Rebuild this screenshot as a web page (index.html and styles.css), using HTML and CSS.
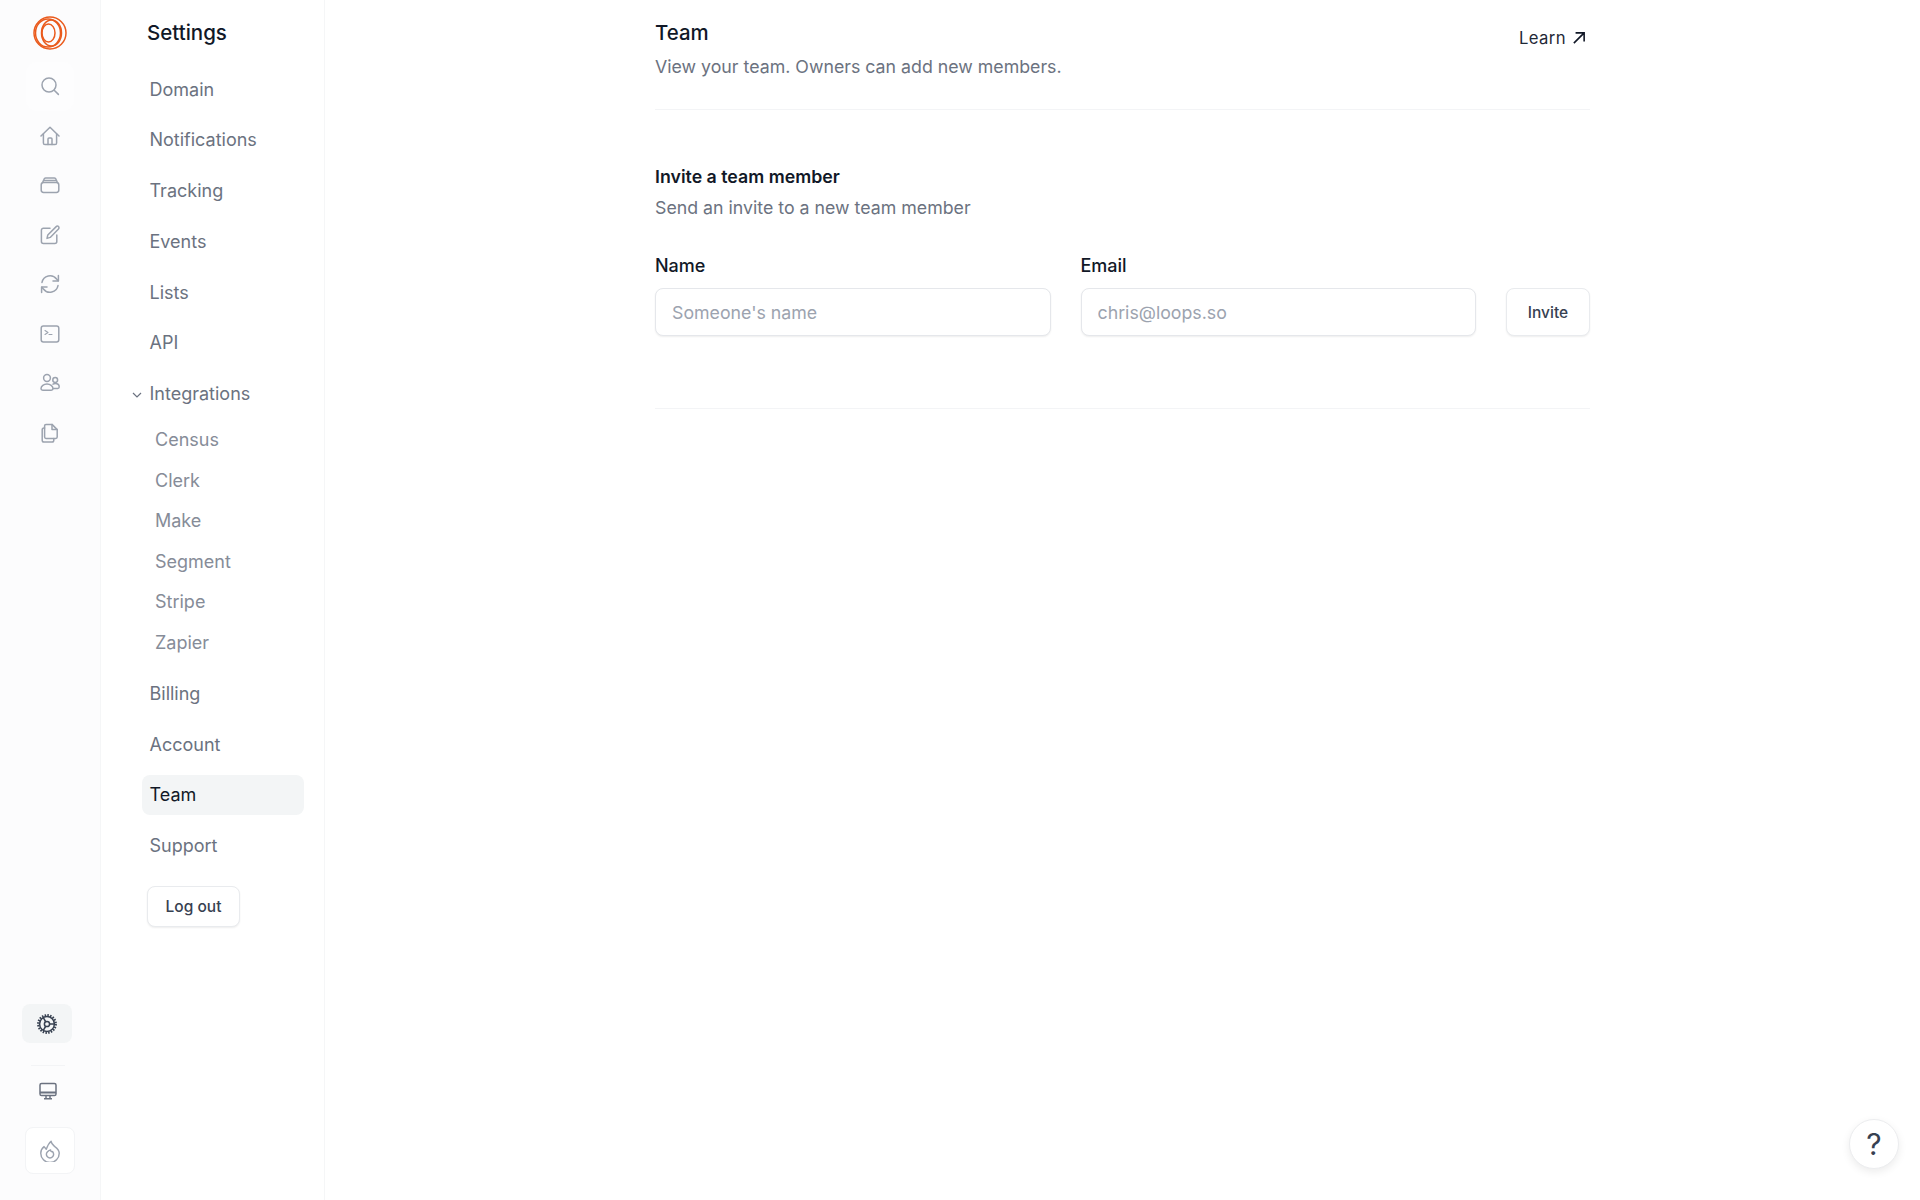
FILE: index.html
```html
<!DOCTYPE html>
<html lang="en">
<head>
  <meta charset="UTF-8">
  <meta name="viewport" content="width=device-width, initial-scale=1.0">
  <title>Team settings</title>
  <link rel="stylesheet" href="styles.css">
</head>
<body>

<div class="app">
  <!-- Icon rail -->
  <aside class="rail">
    <div class="rail-top">
      <a class="logo">
        <svg width="34" height="34" viewBox="0 0 34 34" fill="none" stroke="#ea5a1c" stroke-width="1.5">
          <circle cx="17" cy="17" r="16"/>
          <ellipse cx="15" cy="17" rx="12.500" ry="14"/>
          <ellipse cx="18.500" cy="17" rx="10" ry="13"/>
          <ellipse cx="15.500" cy="17" rx="6.500" ry="9"/>
        </svg>
      </a>
      <a class="rail-link rail-search">
        <svg class="ico" viewBox="0 0 20 20"><circle cx="9" cy="9" r="7"/><path d="M14.2 14.2 18.4 18.4"/></svg>
      </a>
      <a class="rail-link">
        <svg class="ico" viewBox="0 0 20 20"><path d="M1 10 10 1.2 19 10"/><path d="M3.4 8v9a1.6 1.6 0 0 0 1.6 1.6h10a1.6 1.6 0 0 0 1.6-1.6V8"/><path d="M8 18.4V13a1 1 0 0 1 1-1h2a1 1 0 0 1 1 1v5.4"/></svg>
      </a>
      <a class="rail-link">
        <svg class="ico" viewBox="0 0 20 20"><rect x="1.2" y="7.5" width="17.6" height="10" rx="2.4"/><path d="M2.6 7.5 4 4.2A1.8 1.8 0 0 1 5.6 3h8.8A1.8 1.8 0 0 1 16 4.2l1.4 3.3"/><path d="M4 5.6h12"/></svg>
      </a>
      <a class="rail-link">
        <svg class="ico" viewBox="0 0 20 20"><path d="M10 3.2H3.4a2 2 0 0 0-2 2v11.4a2 2 0 0 0 2 2h11.4a2 2 0 0 0 2-2V10"/><path d="M7 13.4l.8-3.4L16.2 1.6a1.6 1.6 0 0 1 2.3 0 1.6 1.6 0 0 1 0 2.3L10.200 12.400z"/></svg>
      </a>
      <a class="rail-link">
        <svg class="ico" viewBox="0 0 20 20"><path d="M2 8.400A8.200 8.200 0 0 1 16.600 5l1.600 1.800"/><path d="M18.400 1.600v5.400h-5.400"/><path d="M18 11.600A8.200 8.200 0 0 1 3.400 15l-1.600-1.800"/><path d="M1.600 18.400V13h5.400"/></svg>
      </a>
      <a class="rail-link">
        <svg class="ico" viewBox="0 0 20 20"><rect x="1.200" y="2" width="17.600" height="16" rx="2.200"/><path stroke-width="1.100" d="M5 6.500 8 8.500 5 10.500M9 10.500h3"/></svg>
      </a>
      <a class="rail-link">
        <svg class="ico" viewBox="0 0 20 20"><circle cx="7" cy="5" r="3.400"/><circle cx="15.200" cy="7" r="2.400"/><path d="M1 15.800c0-2.800 2.800-4.800 6-4.800s6 2 6 4.800c0 1-1 1.400-1.800 1.400H2.800C2 17.200 1 16.800 1 15.800z"/><path d="M13 11.200c.7-.4 1.400-.6 2.200-.6 2.300 0 4 1.400 4 3.400 0 1-.8 1.400-1.500 1.400h-4.300"/></svg>
      </a>
      <a class="rail-link">
        <svg class="ico" viewBox="0 0 20 20"><path d="M6 1.400h6l5.200 5.200V14a1.400 1.400 0 0 1-1.400 1.400H6A1.400 1.400 0 0 1 4.600 14V2.800A1.400 1.400 0 0 1 6 1.400z"/><path d="M12 1.400v5.200h5.200"/><path d="M4.600 5H4a1.800 1.800 0 0 0-1.800 1.800v10.400A1.800 1.800 0 0 0 4 19h8a1.800 1.800 0 0 0 1.800-1.800v-1.800"/></svg>
      </a>
    </div>
    <div class="rail-bottom">
      <a class="rail-settings">
        <svg width="20" height="20" viewBox="0 0 20 20" fill="none" stroke="#374151">
          <circle cx="10" cy="10" r="7.400" stroke-width="1.500"/>
          <circle cx="10" cy="10" r="8.800" stroke-width="2.200" stroke-dasharray="1.500 1.270"/>
          <circle cx="10" cy="10" r="2.600" stroke-width="1.500"/>
          <path stroke-width="1.500" d="M12.600 10h4.800M8.700 7.750 6.300 3.600M8.700 12.250 6.300 16.400"/>
        </svg>
      </a>
      <div class="rail-sep"></div>
      <a class="rail-monitor">
        <svg width="18" height="18" viewBox="0 0 18 18" fill="none" stroke="#6b7280" stroke-width="1.500"><rect x="1" y="1.500" width="16" height="12" rx="1.600"/><path d="M1 10.500h16" stroke-width="2"/><path d="M7 13.500v3M11 13.500v3M5 16.800h8"/></svg>
      </a>
      <a class="rail-fire">
        <svg width="22" height="22" viewBox="0 0 20 20" fill="none" stroke="#9ca3af" stroke-width="1.300" stroke-linejoin="round"><path d="M11 1.200c.3 2.400 1.800 3.400 3.400 4.800C17 8 18.400 9.800 18.400 12a8.400 8.400 0 1 1-16.800 0c0-2.600 1.200-4.600 3-6l2 2.400C7.600 5.800 8.800 3 11 1.200z"/><path d="M10.500 9c0 1.500 1 1.800 1.800 1.500.6.800 1 1.500 1 2.500a3.300 3.300 0 1 1-6.600 0c0-1.800 1.500-3 3.800-4z"/></svg>
      </a>
    </div>
  </aside>

  <!-- Settings nav -->
  <nav class="sidebar">
    <h2 class="sidebar-title">Settings</h2>
    <a class="nav-item">Domain</a>
    <a class="nav-item">Notifications</a>
    <a class="nav-item">Tracking</a>
    <a class="nav-item">Events</a>
    <a class="nav-item">Lists</a>
    <a class="nav-item">API</a>
    <a class="nav-item nav-group">
      <svg class="chevron" width="12" height="12" viewBox="0 0 12 12" fill="none" stroke="#6b7280" stroke-width="1.200"><path d="M2 4l4 4 4-4"/></svg>
      Integrations
    </a>
    <div class="subnav">
      <a class="sub-item">Census</a>
      <a class="sub-item">Clerk</a>
      <a class="sub-item">Make</a>
      <a class="sub-item">Segment</a>
      <a class="sub-item">Stripe</a>
      <a class="sub-item">Zapier</a>
    </div>
    <a class="nav-item">Billing</a>
    <a class="nav-item">Account</a>
    <a class="nav-item active">Team</a>
    <a class="nav-item">Support</a>
    <button class="btn logout">Log out</button>
  </nav>

  <main class="main">
    <div class="content">
      <header class="page-head">
        <div>
          <h1 class="page-title">Team</h1>
          <p class="page-sub">View your team. Owners can add new members.</p>
        </div>
        <a class="learn">Learn
          <svg width="16" height="16" viewBox="0 0 14 14" fill="none" stroke="#111827" stroke-width="1.400"><path d="M2.500 11.500 11.500 2.500M4 2.500h7.500V10"/></svg>
        </a>
      </header>

      <section class="invite">
        <h3 class="invite-title">Invite a team member</h3>
        <p class="invite-sub">Send an invite to a new team member</p>
        <form class="invite-form">
          <label class="field">
            <span class="field-label">Name</span>
            <input class="input" type="text" placeholder="Someone's name">
          </label>
          <label class="field">
            <span class="field-label">Email</span>
            <input class="input" type="text" placeholder="chris@loops.so">
          </label>
          <button class="btn invite-btn" type="button">Invite</button>
        </form>
      </section>
    </div>
  </main>
</div>

<button class="help">?</button>

</body>
</html>
```

FILE: styles.css
```css
* {
  box-sizing: border-box;
}

body {
  margin: 0;
  font-family: Inter, "Liberation Sans", sans-serif;
  color: #111827;
  background-color: #fff;
}

.app {
  display: flex;
  height: 1200px;
  overflow: hidden;
}

/* Icon rail on the far left */
.rail {
  width: 101px;
  flex: 0 0 auto;
  display: flex;
  flex-direction: column;
  justify-content: space-between;
  background-color: #fcfcfd;
  border-right: 1px solid #f5f6f7;
  padding: 16px 0 26px;
}

.rail-top {
  display: flex;
  flex-direction: column;
  align-items: center;
}

.logo {
  height: 34px;
  margin-bottom: 11.500px;
}

.rail-link {
  width: 48px;
  height: 49.500px;
  display: flex;
  align-items: center;
  justify-content: center;
}

.rail-search {
  background-color: #fdfdfe;
  border-radius: 10px;
}

.ico {
  width: 20px;
  height: 20px;
  fill: none;
  stroke: #9ca3af;
  stroke-width: 1.5;
  stroke-linecap: round;
  stroke-linejoin: round;
}

.rail-bottom {
  display: flex;
  flex-direction: column;
  align-items: center;
}

.rail-settings {
  width: 50px;
  height: 39px;
  margin-right: 6px;
  display: flex;
  align-items: center;
  justify-content: center;
  background-color: #f3f5f6;
  border-radius: 8px;
}

.rail-sep {
  width: 34px;
  height: 1px;
  margin: 22px 4px 16px 0;
  background-color: #f3f4f6;
}

.rail-monitor {
  height: 18px;
  margin-right: 4px;
  margin-bottom: 27px;
}

.rail-fire {
  width: 50px;
  height: 47px;
  display: flex;
  align-items: center;
  justify-content: center;
  background-color: #fff;
  border: 1px solid #f3f4f6;
  border-radius: 8px;
}

/* Settings list */
.sidebar {
  width: 224px;
  flex: 0 0 auto;
  display: flex;
  flex-direction: column;
  padding: 20px 20px 0 41px;
  border-right: 1px solid #f5f6f7;
}

.sidebar-title {
  margin: 0 0 23.500px 5px;
  font-size: 20.500px;
  line-height: 26px;
  font-weight: 500;
}

.nav-item {
  position: relative;
  height: 40px;
  margin-bottom: 10.800px;
  padding-left: 7.500px;
  font-size: 18px;
  line-height: 40px;
  color: #6b7280;
}

.nav-item.active {
  background-color: #f3f5f6;
  border-radius: 8px;
  color: #111827;
}

.chevron {
  position: absolute;
  left: -11px;
  top: 15px;
}

.nav-group {
  margin-bottom: 6px;
}

.subnav {
  display: flex;
  flex-direction: column;
  margin-bottom: 10.500px;
}

.sub-item {
  height: 40.500px;
  padding-left: 13px;
  font-size: 18px;
  line-height: 40.500px;
  color: #868c98;
}

.btn {
  background-color: #fff;
  border: 1px solid #e9ebee;
  border-radius: 8px;
  box-shadow: 0 1px 2px rgba(0, 0, 0, 0.07);
  font-family: inherit;
  font-size: 15.500px;
  font-weight: 500;
  color: #374151;
  cursor: pointer;
}

.logout {
  width: 93px;
  height: 41px;
  margin: 9px 0 0 5px;
}

/* Main column */
.main {
  flex: 1;
  padding-left: 330px;
}

.content {
  width: 935px;
}

.page-head {
  display: flex;
  justify-content: space-between;
  height: 110px;
  padding-top: 20px;
  border-bottom: 1px solid #f3f4f6;
}

.page-title {
  margin: 0;
  font-size: 20.400px;
  line-height: 26px;
  font-weight: 500;
}

.page-sub {
  margin: 7.500px 0 0;
  font-size: 17.750px;
  line-height: 26px;
  color: #6b7280;
}

.learn {
  display: flex;
  align-items: center;
  gap: 5px;
  height: 36px;
  margin-right: 3px;
  font-size: 16.700px;
  letter-spacing: 0.4px;
  color: #1f2937;
}

.invite {
  height: 299px;
  padding-top: 55px;
  border-bottom: 1px solid #f3f4f6;
}

.invite-title {
  margin: 0;
  font-size: 17.750px;
  line-height: 24px;
  font-weight: 600;
}

.invite-sub {
  margin: 7px 0 0;
  font-size: 17.750px;
  line-height: 24px;
  color: #6b7280;
}

.invite-form {
  display: flex;
  align-items: flex-end;
  gap: 30px;
  margin-top: 34px;
}

.field {
  flex: 1;
  display: flex;
  flex-direction: column;
  gap: 10px;
}

.field-label {
  font-size: 18px;
  line-height: 24px;
  font-weight: 500;
}

.input {
  width: 100%;
  height: 48px;
  padding: 0 16px;
  background-color: #fff;
  border: 1px solid #e5e7eb;
  border-radius: 8px;
  box-shadow: 0 1px 2px rgba(0, 0, 0, 0.07);
  font-family: inherit;
  font-size: 17.750px;
}

.input::placeholder {
  color: #9ca3af;
}

.invite-btn {
  width: 84px;
  height: 48px;
}

/* Floating help button */
.help {
  position: absolute;
  right: 21px;
  bottom: 31px;
  width: 50px;
  height: 50px;
  padding: 0;
  background-color: #fff;
  border: 1px solid #ecedef;
  border-radius: 50%;
  box-shadow: 0 3px 8px rgba(0, 0, 0, 0.08);
  font-family: inherit;
  font-size: 30px;
  color: #374151;
}
```
